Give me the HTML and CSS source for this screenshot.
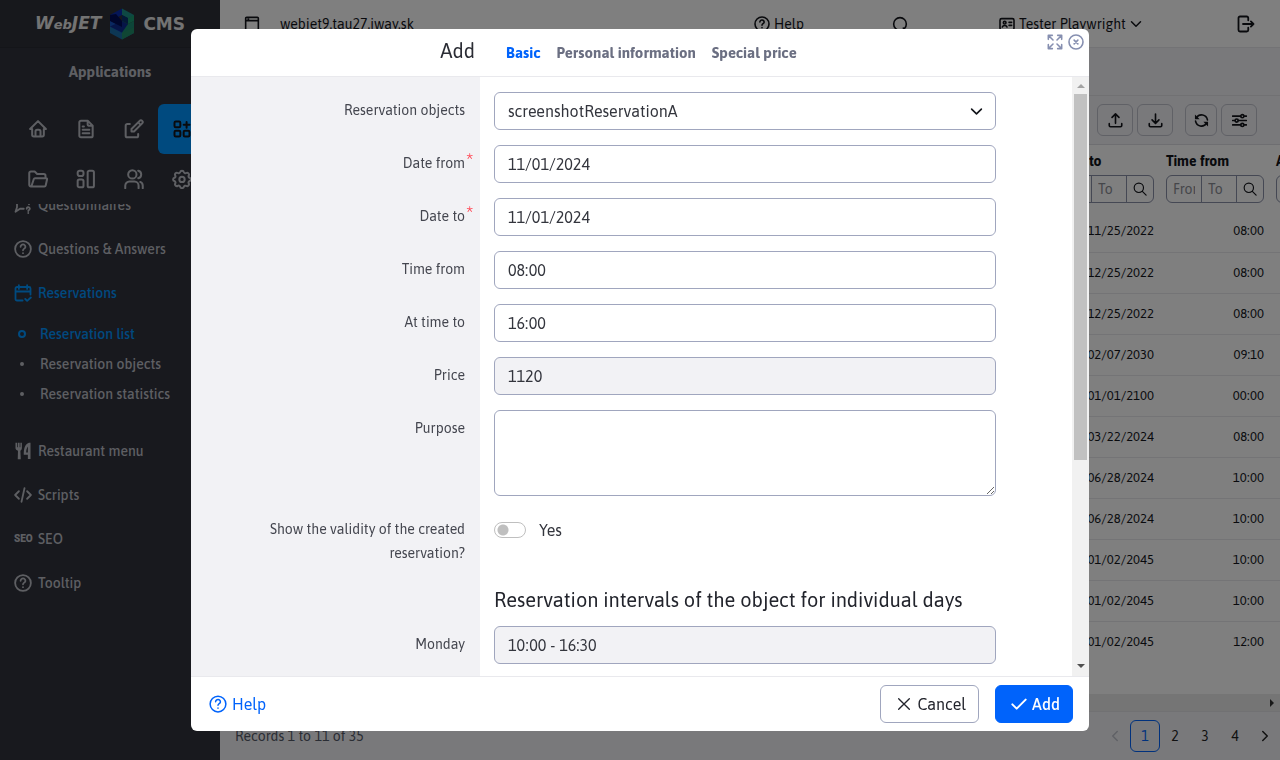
FILE: index.html
```html
<!DOCTYPE html>
<html lang="en">
<head>
<meta charset="utf-8">
<title>WebJET CMS</title>
<link rel="stylesheet" href="styles.css">
</head>
<body>
<svg class="defs" width="0" height="0" aria-hidden="true">
  <symbol id="i-home" viewBox="0 0 24 24"><path d="M5 12H2.500L12 2.500l9.500 9.500H19M5 12v7a2 2 0 0 0 2 2h10a2 2 0 0 0 2-2v-7M9 21v-6a2 2 0 0 1 2-2h2a2 2 0 0 1 2 2v6"/></symbol>
  <symbol id="i-file" viewBox="0 0 24 24"><path d="M14 3v4a1 1 0 0 0 1 1h5M18 22H6a2 2 0 0 1-2-2V4a2 2 0 0 1 2-2h8l6 6v12a2 2 0 0 1-2 2zM8 9h1.500M8 13h8M8 17h8"/></symbol>
  <symbol id="i-edit" viewBox="0 0 24 24"><path d="M7 6H4a2 2 0 0 0-2 2v12a2 2 0 0 0 2 2h11a2 2 0 0 0 2-2v-2M21.800 5.200a2 2 0 0 0-3-3L9 12v3h3zM17 4l3 3"/></symbol>
  <symbol id="i-apps" viewBox="0 0 24 24"><rect x="3" y="3" width="7" height="7" rx="1.500"/><rect x="3" y="14" width="7" height="7" rx="1.500"/><rect x="14" y="14" width="7" height="7" rx="1.500"/><path d="M14 7h7M17.500 3.500v7"/></symbol>
  <symbol id="i-folder" viewBox="0 0 24 24"><path d="M4 21l3-9A1.500 1.500 0 0 1 8.500 11H22a1 1 0 0 1 .9 1.200l-1.600 7.200A2 2 0 0 1 19.500 21H3.500a2 2 0 0 1-2-2V5a2 2 0 0 1 2-2H8l3 3h8a2 2 0 0 1 2 2v3"/></symbol>
  <symbol id="i-layout" viewBox="0 0 24 24"><rect x="2" y="2" width="7" height="6.500" rx="2.500"/><rect x="2" y="12.500" width="7" height="9.500" rx="2"/><rect x="14" y="2" width="7.500" height="20" rx="2"/></symbol>
  <symbol id="i-users" viewBox="0 0 24 24"><circle cx="10" cy="6.500" r="5"/><path d="M1.500 23v-3a5 5 0 0 1 5-5h6a5 5 0 0 1 5 5v3M17 2a4.600 4.600 0 0 1 0 9M22.500 23v-3a5 5 0 0 0-3-4.500"/></symbol>
  <symbol id="i-gear" viewBox="0 0 24 24"><path d="M9.800 3.600c.5-2.100 3.900-2.100 4.400 0a2 2 0 0 0 2.900 1.200c1.900-1.100 4.100 1.200 3 3a2 2 0 0 0 1 2.800c2.100.5 2.100 3.300 0 3.800a2 2 0 0 0-1 2.900c1.100 1.800-1.200 4.100-3 3a2 2 0 0 0-2.900 1.100c-.5 2.100-3.900 2.100-4.400 0a2 2 0 0 0-2.900-1.200c-1.900 1.200-4.100-1.100-3-2.900a2 2 0 0 0-1-2.900c-2.100-.5-2.100-3.300 0-3.800a2 2 0 0 0 1-2.900c-1.100-1.800 1.100-4.100 3-2.900a2 2 0 0 0 2.900-1.200z"/><circle cx="12" cy="12.500" r="3.200"/></symbol>
  <symbol id="i-help" viewBox="0 0 24 24"><circle cx="12" cy="12" r="10.500"/><path d="M8.800 9a3.200 3.200 0 0 1 6.400.3c0 2-3.200 2.400-3.200 4.400M12 17.400v.2"/></symbol>
  <symbol id="i-chat" viewBox="0 0 24 24"><path d="M13 17H8l-6 4 2-6V5h16v6M17 17a2 2 0 1 1 3 1.600c-.7.400-1 .8-1 1.400M19 22.500v.2"/></symbol>
  <symbol id="i-cal" viewBox="0 0 24 24"><path d="M11.500 22H4a2 2 0 0 1-2-2V6a2 2 0 0 1 2-2h16a2 2 0 0 1 2 2v8M17.500 1.500v5M6.500 1.500v5M2 10h20M15 20l2.500 2.500L22.500 18"/></symbol>
  <symbol id="i-food" viewBox="0 0 24 24"><path class="solid" d="M2 1h2v6h1V1h2.500v6h1V1h2v7c0 2-1 3-2 3.500L9 23H5l.3-11.500C3.500 11 2 10 2 8zM20 1h2v21.500h-3.500V17H13c0-7 1-14 7-16zM18.500 6C17 8 16.200 11 16.200 14h2.300z"/></symbol>
  <symbol id="i-code" viewBox="0 0 24 24"><path d="M6.500 7l-5 5 5 5M17.500 7l5 5-5 5M14 3l-4 18"/></symbol>
  <symbol id="i-window" viewBox="0 0 24 24"><rect x="2.500" y="2" width="19" height="20" rx="1.500"/><path d="M3 7h18M6 4.500h1"/></symbol>
  <symbol id="i-search" viewBox="0 0 24 24"><circle cx="10" cy="10" r="8"/><path d="M16 16l6.500 6.500"/></symbol>
  <symbol id="i-find" viewBox="0 0 24 24"><circle cx="12" cy="12" r="9.500"/><path d="M17 18l4 4.500"/></symbol>
  <symbol id="i-id" viewBox="0 0 24 24"><rect x="1.500" y="4" width="21" height="17" rx="2.500"/><circle cx="8.500" cy="10" r="2"/><path d="M5 16.500c1-3 6-3 7 0M15 9.500h4M15 14h4"/></symbol>
  <symbol id="i-down" viewBox="0 0 24 24"><path d="M3 7.500l9 9 9-9"/></symbol>
  <symbol id="i-logout" viewBox="0 0 24 24"><path d="M15 7V4a2 2 0 0 0-2-2H4a2 2 0 0 0-2 2v16a2 2 0 0 0 2 2h9a2 2 0 0 0 2-2v-3M8 12h14M18.500 8.500L22 12l-3.500 3.500"/></symbol>
  <symbol id="i-upload" viewBox="0 0 24 24"><path d="M2 17v3a2 2 0 0 0 2 2h16a2 2 0 0 0 2-2v-3M6.500 7L12 1.500 17.500 7M12 2v14.500"/></symbol>
  <symbol id="i-download" viewBox="0 0 24 24"><path d="M2 17v3a2 2 0 0 0 2 2h16a2 2 0 0 0 2-2v-3M6.500 11l5.500 5.500 5.500-5.500M12 1.500v14"/></symbol>
  <symbol id="i-refresh" viewBox="0 0 24 24"><path d="M21.500 11A9.600 9.600 0 0 0 4 7.500M2.500 13A9.600 9.600 0 0 0 20 16.500"/><path class="solid" d="M1.500 2.500v7.500H9zM22.500 21.500V14H15z"/></symbol>
  <symbol id="i-sliders" viewBox="0 0 24 24"><path d="M1 5h13M19 5h4M1 12h4M10 12h13M1 19h13M19 19h4"/><circle cx="16.500" cy="5" r="2.500"/><circle cx="7.500" cy="12" r="2.500"/><circle cx="16.500" cy="19" r="2.500"/></symbol>
  <symbol id="i-expand" viewBox="0 0 24 24"><path d="M9 9L3 3M15 9l6-6M9 15l-6 6M15 15l6 6M2 8V2h6M16 2h6v6M2 16v6h6M16 22h6v-6"/></symbol>
  <symbol id="i-close" viewBox="0 0 24 24"><circle cx="12" cy="12" r="10.500"/><path d="M9.200 9.200l5.600 5.600M14.800 9.200l-5.600 5.600"/></symbol>
  <symbol id="i-x" viewBox="0 0 24 24"><path d="M4 4l16 16M20 4L4 20"/></symbol>
  <symbol id="i-check" viewBox="0 0 24 24"><path d="M2 12.500l6.500 6.500L22 5.500"/></symbol>
  <symbol id="i-left" viewBox="0 0 24 24"><path d="M16.500 3l-9 9 9 9"/></symbol>
  <symbol id="i-right" viewBox="0 0 24 24"><path d="M7.500 3l9 9-9 9"/></symbol>
</svg>

<div class="app">
  <aside class="sidebar">
    <div class="logo">
      <span class="logo-text"><i>W<small>eb</small>JET</i></span>
      <svg class="logo-mark" viewBox="0 0 26 32" aria-hidden="true">
        <path fill="#1a6ea8" d="M1 18l12 6 12-5v6l-12 6.500L1 25z"/>
        <path fill="#208c68" d="M13 24l12-5.500v6.500l-12 6.500z"/>
        <path fill="#1450c0" d="M1 12.500L13 19v6L1 18.500z"/>
        <path fill="#1a8a70" d="M25 13v6l-12 6v-6z"/>
        <path fill="#0c2a90" d="M1 18.500l12-5.500 6 3-6 8.500z"/>
        <path fill="#0a2cae" d="M13 .5V7L1 13V7z"/>
        <path fill="#1c9088" d="M13 .5L25 7v6.500L13 7z"/>
        <path fill="#1a9a70" d="M25 7v6l-6 3-6-3z"/>
        <path fill="#000c58" d="M1 7l6-1 6 7v6L1 13z"/>
        <path fill="#06306e" d="M13 7l6 3v6l-6-3z"/>
      </svg>
      <span class="logo-text">CMS</span>
    </div>
    <h1 class="side-title">Applications</h1>
    <nav class="tiles" aria-label="Sections">
      <a href="#" aria-label="Home"><svg class="ico"><use href="#i-home"/></svg></a>
      <a href="#" aria-label="Pages"><svg class="ico"><use href="#i-file"/></svg></a>
      <a href="#" aria-label="Edit"><svg class="ico"><use href="#i-edit"/></svg></a>
      <a href="#" aria-label="Applications" class="active"><svg class="ico"><use href="#i-apps"/></svg></a>
      <a href="#" aria-label="Files"><svg class="ico"><use href="#i-folder"/></svg></a>
      <a href="#" aria-label="Templates"><svg class="ico"><use href="#i-layout"/></svg></a>
      <a href="#" aria-label="Users"><svg class="ico"><use href="#i-users"/></svg></a>
      <a href="#" aria-label="Settings"><svg class="ico"><use href="#i-gear"/></svg></a>
    </nav>
    <nav class="menu" aria-label="Applications">
      <ul class="menu-list">
        <li><a href="#"><svg class="ico"><use href="#i-chat"/></svg>Questionnaires</a></li>
        <li><a href="#"><svg class="ico"><use href="#i-help"/></svg>Questions &amp; Answers</a></li>
        <li><a href="#" class="on"><svg class="ico"><use href="#i-cal"/></svg>Reservations</a>
          <ul class="sub">
            <li><a href="#" class="on"><span class="ring"></span>Reservation list</a></li>
            <li><a href="#"><span class="dot"></span>Reservation objects</a></li>
            <li><a href="#"><span class="dot"></span>Reservation statistics</a></li>
          </ul>
        </li>
        <li><a href="#"><svg class="ico"><use href="#i-food"/></svg>Restaurant menu</a></li>
        <li><a href="#"><svg class="ico"><use href="#i-code"/></svg>Scripts</a></li>
        <li><a href="#"><b class="seo">SEO</b>SEO</a></li>
        <li><a href="#"><svg class="ico"><use href="#i-help"/></svg>Tooltip</a></li>
      </ul>
    </nav>
  </aside>

  <main class="main">
    <header class="topbar">
      <a href="#" class="site"><svg class="ico"><use href="#i-window"/></svg>webjet9.tau27.iway.sk</a>
      <div class="topnav">
        <a href="#"><svg class="ico"><use href="#i-help"/></svg>Help</a>
        <a href="#" aria-label="Search"><svg class="ico"><use href="#i-find"/></svg></a>
        <a href="#"><svg class="ico"><use href="#i-id"/></svg>Tester Playwright<svg class="ico chev"><use href="#i-down"/></svg></a>
        <a href="#" aria-label="Log out"><svg class="ico big"><use href="#i-logout"/></svg></a>
      </div>
    </header>
    <div class="band"></div>
    <div class="toolbar">
      <button type="button" aria-label="Import"><svg class="ico"><use href="#i-upload"/></svg></button>
      <button type="button" aria-label="Export"><svg class="ico"><use href="#i-download"/></svg></button>
      <button type="button" aria-label="Reload" class="apart"><svg class="ico"><use href="#i-refresh"/></svg></button>
      <button type="button" aria-label="Settings"><svg class="ico"><use href="#i-sliders"/></svg></button>
    </div>
    <div class="grid-wrap">
      <table class="grid">
        <colgroup><col><col class="c"><col class="c"><col class="c"></colgroup>
        <thead>
          <tr>
            <th></th>
            <th>Date to
              <div class="filter"><input aria-label="Date to from" placeholder="From"><input aria-label="Date to until" placeholder="To"><button type="button" aria-label="Filter"><svg class="ico"><use href="#i-search"/></svg></button></div></th>
            <th>Time from
              <div class="filter"><input aria-label="Time from from" placeholder="From"><input aria-label="Time from until" placeholder="To"><button type="button" aria-label="Filter"><svg class="ico"><use href="#i-search"/></svg></button></div></th>
            <th>At time to
              <div class="filter"><input aria-label="At time to from" placeholder="From"><input aria-label="At time to until" placeholder="To"><button type="button" aria-label="Filter"><svg class="ico"><use href="#i-search"/></svg></button></div></th>
          </tr>
        </thead>
        <tbody>
          <tr><td></td><td>11/25/2022</td><td>08:00</td><td></td></tr>
          <tr><td></td><td>12/25/2022</td><td>08:00</td><td></td></tr>
          <tr><td></td><td>12/25/2022</td><td>08:00</td><td></td></tr>
          <tr><td></td><td>02/07/2030</td><td>09:10</td><td></td></tr>
          <tr><td></td><td>01/01/2100</td><td>00:00</td><td></td></tr>
          <tr><td></td><td>03/22/2024</td><td>08:00</td><td></td></tr>
          <tr><td></td><td>06/28/2024</td><td>10:00</td><td></td></tr>
          <tr><td></td><td>06/28/2024</td><td>10:00</td><td></td></tr>
          <tr><td></td><td>01/02/2045</td><td>10:00</td><td></td></tr>
          <tr><td></td><td>01/02/2045</td><td>10:00</td><td></td></tr>
          <tr><td></td><td>01/02/2045</td><td>12:00</td><td></td></tr>
        </tbody>
      </table>
    </div>
    <div class="hbar" aria-hidden="true"><span class="arrow-r"></span></div>
    <footer class="pager">
      <span>Records 1 to 11 of 35</span>
      <nav class="pages" aria-label="Pages">
        <a href="#" aria-label="Previous" class="off"><svg class="ico"><use href="#i-left"/></svg></a>
        <a href="#" class="cur">1</a><a href="#">2</a><a href="#">3</a><a href="#">4</a>
        <a href="#" aria-label="Next"><svg class="ico"><use href="#i-right"/></svg></a>
      </nav>
    </footer>
  </main>
</div>

<div class="backdrop">
  <form class="modal" role="dialog" aria-labelledby="dlg-title">
    <header class="modal-head">
      <h2 id="dlg-title">Add</h2>
      <nav class="tabs">
        <a href="#" class="on">Basic</a><a href="#">Personal information</a><a href="#">Special price</a>
      </nav>
      <div class="win">
        <button type="button" aria-label="Maximize"><svg class="ico"><use href="#i-expand"/></svg></button>
        <button type="button" aria-label="Close"><svg class="ico"><use href="#i-close"/></svg></button>
      </div>
    </header>
    <div class="modal-body">
      <div class="fields">
        <div class="row"><label for="f1">Reservation objects</label>
          <div class="select"><select id="f1"><option>screenshotReservationA</option></select><svg class="ico"><use href="#i-down"/></svg></div></div>
        <div class="row"><label for="f2">Date from<span class="req">*</span></label><input id="f2" value="11/01/2024"></div>
        <div class="row"><label for="f3">Date to<span class="req">*</span></label><input id="f3" value="11/01/2024"></div>
        <div class="row"><label for="f4">Time from</label><input id="f4" value="08:00"></div>
        <div class="row"><label for="f5">At time to</label><input id="f5" value="16:00"></div>
        <div class="row"><label for="f6">Price</label><input id="f6" value="1120" readonly></div>
        <div class="row"><label for="f7">Purpose</label><textarea id="f7"></textarea></div>
        <div class="row"><span class="cap" id="cap8">Show the validity of the created reservation?</span>
          <label class="switch"><input type="checkbox" aria-describedby="cap8">Yes</label></div>
        <div class="row head"><h3>Reservation intervals of the object for individual days</h3></div>
        <div class="row"><label for="f9">Monday</label><input id="f9" value="10:00 - 16:30" readonly></div>
      </div>
      <div class="vbar" aria-hidden="true"><span class="arrow-u"></span><div class="track"><div class="thumb"></div></div><span class="arrow-d"></span></div>
    </div>
    <footer class="modal-foot">
      <a href="#" class="help"><svg class="ico"><use href="#i-help"/></svg>Help</a>
      <button type="button" class="btn"><svg class="ico"><use href="#i-x"/></svg>Cancel</button>
      <button type="submit" class="btn primary"><svg class="ico"><use href="#i-check"/></svg>Add</button>
    </footer>
  </form>
</div>
</body>
</html>
```
FILE: styles.css
```css
* { box-sizing: border-box; }
body { margin: 0; font: 14px/24px Asap, Lato, "Open Sans", sans-serif; color: #13151b; overflow: hidden; }
button, input, select, textarea { font: inherit; color: inherit; }
a { color: inherit; text-decoration: none; }
ul { list-style: none; margin: 0; padding: 0; }
h1, h2, h3 { margin: 0; font-weight: 400; }
.defs { position: absolute; }
.ico { width: 18px; height: 18px; flex: none; fill: none; stroke: currentColor; stroke-width: 2; stroke-linecap: round; stroke-linejoin: round; }
.solid { fill: currentColor; stroke: none; }

.app { display: flex; height: 100vh; }

/* Sidebar */
.sidebar { width: 220px; flex: none; display: flex; flex-direction: column; background: #30333c; color: #bcbec6; }
.logo { height: 48px; display: flex; align-items: center; justify-content: center; gap: 8px; border-bottom: 1px solid #292b33; background: #2f3139; }
.logo-text { font: 700 17px/24px "DejaVu Sans", sans-serif; color: #e6e6e6; }
.logo-text small { font-size: 13px; }
.logo-mark { width: 26px; height: 32px; }
.side-title { font-size: 15px; font-weight: 700; text-align: center; padding: 12px 0 20px; }
.tiles { display: grid; grid-template-columns: repeat(4, 48px); grid-auto-rows: 50px; padding: 0 14px; flex: none; }
.tiles a { display: flex; align-items: center; justify-content: center; border-radius: 6px; }
.tiles .ico { width: 20px; height: 20px; stroke-width: 2.4; }
.tiles .active { background: #0094ff; color: #13151b; }
.menu { overflow: hidden; flex: 1; }
.menu-list { margin-top: -21px; }
.menu a { display: flex; align-items: center; gap: 6px; height: 44px; padding-left: 14px; font-weight: 500; }
.menu .on { color: #0094ff; }
.menu .ico { stroke-width: 2.4; }
.sub { padding: 4px 0 20px; }
.menu .sub a { height: 30px; gap: 8px; }
.ring, .dot { width: 8px; height: 8px; border-radius: 50%; margin: 0 5px 0 4px; border: 2px solid currentColor; }
.ring { margin-right: 6px; }
.dot { width: 4px; height: 4px; margin: 0 8px 0 6px; }
.seo { width: 18px; font: 900 10px/10px Roboto, sans-serif; }

/* Main area */
.main { flex: 1; min-width: 0; display: flex; flex-direction: column; background: #fff; }
.topbar { height: 48px; display: flex; align-items: center; justify-content: space-between; padding: 0 25px 0 24px; border-bottom: 1px solid #e6e6ea; }
.topbar a { display: flex; align-items: center; gap: 4px; }
.topbar .ico { width: 16px; height: 16px; stroke-width: 2.4; }
.topbar .site { gap: 20px; }
.topbar .chev { width: 12px; height: 12px; stroke-width: 3; }
.topbar .big { width: 18px; height: 18px; }
.topnav { display: grid; grid-template-columns: 138px 107px 238px 18px; }
.band { height: 48px; background: #f3f3f6; border-bottom: 1px solid #e2e2e6; }
.toolbar { height: 49px; display: flex; align-items: center; justify-content: flex-end; gap: 4px; padding: 0 23px; background: #f3f3f6; border-bottom: 1px solid #dcdce2; }
.toolbar button { width: 36px; height: 32px; display: flex; align-items: center; justify-content: center; padding: 0; background: none; border: 1px solid #c0c2cd; border-radius: 6px; }
.toolbar .apart { width: 32px; margin-left: 8px; }
.toolbar .ico { width: 15px; height: 15px; stroke-width: 2.6; }
.grid-wrap { flex: 1; overflow: hidden; }
.grid { width: calc(100% + 100px); table-layout: fixed; border-collapse: collapse; }
.grid .c { width: 110px; }
.grid th { padding: 8px 6px; text-align: left; font-weight: 700; line-height: 17px; white-space: nowrap; }
.grid td { height: 41px; padding: 0 6px; border-bottom: 1px solid #e9e9ed; text-align: right; font-size: 13px; }
.grid tr:last-child td { border: 0; }
.filter { display: grid; grid-template-columns: 35px 35px 26px; height: 28px; margin-top: 5px; border: 1px solid #8a90a8; border-radius: 6px; overflow: hidden; font-weight: 400; }
.filter input { min-width: 0; width: 100%; border: 0; border-right: 1px solid #8a90a8; background: none; padding: 0 6px; }
.filter input::placeholder { color: #8b8d95; }
.filter button { display: flex; align-items: center; justify-content: center; border: 0; padding: 0; background: none; }
.filter .ico { width: 14px; height: 14px; }
.hbar { height: 17px; display: flex; align-items: center; justify-content: flex-end; padding-right: 6px; background: #eaeaea; }
.arrow-r { border: 4px solid transparent; border-left-color: #333; border-right: 0; }
.pager { height: 49px; display: flex; align-items: center; justify-content: space-between; padding: 0 0 0 15px; background: #f3f3f6; border-top: 1px solid #e2e2e6; color: #555a68; }
.pages { display: flex; color: #222; }
.pages a { width: 30px; height: 32px; display: flex; align-items: center; justify-content: center; border: 1px solid transparent; }
.pages .cur { color: #0063fb; border-color: #0063fb; border-radius: 6px; }
.pages .off { color: #c0c2cc; }
.pages .ico { width: 12px; height: 12px; stroke-width: 3; }

/* Dialog */
.backdrop { position: fixed; inset: 0; display: flex; justify-content: center; align-items: center; background: rgba(0, 0, 0, .5); }
.modal { width: 94%; max-width: 898px; height: calc(100vh - 58px); display: flex; flex-direction: column; background: #fff; border-radius: 6px; overflow: hidden; }
.modal-head { flex: none; height: 48px; display: flex; align-items: center; border-bottom: 1px solid #e9e9ed; }
.modal-head h2 { width: 284px; padding-bottom: 3px; text-align: right; font-size: 20px; color: #2b2d35; }
.tabs { flex: 1; display: flex; gap: 16px; margin-left: 31px; font-size: 15px; font-weight: 700; color: #6b6f82; }
.tabs .on { color: #0063fb; }
.win { display: flex; gap: 5px; align-self: flex-start; padding: 5px 5px 0 0; }
.win button { padding: 0; border: 0; background: none; color: #868fb0; display: flex; }
.win .ico { width: 16px; height: 16px; stroke-width: 2.4; }
.modal-body { flex: 1; min-height: 0; display: flex; }
.fields { flex: 1; min-width: 0; overflow: hidden; padding-top: 15px; background: linear-gradient(90deg, #f2f2f5 289px, #fff 289px); }
.row { display: grid; grid-template-columns: 274px minmax(0, 1fr); gap: 29px; align-items: start; padding: 0 76px 15px 0; }
.row > label:first-child, .cap { text-align: right; padding-top: 6px; color: #44464f; }
.cap { padding-left: 60px; }
.req { display: inline-block; width: 8px; margin-right: -8px; padding-left: 1px; color: #ff4b58; font-size: 20px; line-height: 20px; vertical-align: top; }
.row > input, .row select, .row textarea { width: 100%; height: 38px; margin: 0; padding: 0 13px; font-size: 16px; border: 1px solid #a0a6be; border-radius: 6px; background: #fff; color: #33353d; display: block; }
.row textarea { height: 86px; }
.row > input:read-only { background: #f2f2f5; }
.select { display: grid; align-items: center; }
.select select { grid-area: 1 / 1; appearance: none; }
.select .ico { grid-area: 1 / 1; justify-self: end; margin-right: 13px; width: 13px; height: 13px; stroke-width: 3; pointer-events: none; }
.switch { display: flex; align-items: center; gap: 13px; padding-top: 7px; font-size: 16px; color: #33353d; }
.switch input { appearance: none; width: 32px; height: 16px; margin: 0; border: 1px solid #bfbfbf; border-radius: 8px; background: radial-gradient(circle at 8px 7px, #bfbfbf 5px, #fff 6px); }
.row.head { padding-top: 5px; padding-bottom: 11px; }
.head h3 { grid-column: 2; font-size: 20px; line-height: 30px; color: #22242c; white-space: nowrap; }
.vbar { width: 17px; flex: none; display: flex; flex-direction: column; align-items: center; background: #f1f1f1; }
.track { flex: 1; width: 13px; }
.thumb { height: 65%; background: #c1c1c1; }
.arrow-u { border: 4px solid transparent; border-bottom-color: #a3a3a3; border-top: 0; margin: 7px 0 6px; }
.arrow-d { border: 4px solid transparent; border-top-color: #505050; border-bottom: 0; margin: 7px 0 8px; }
.modal-foot { flex: none; display: flex; align-items: center; gap: 16px; padding: 8px 16px 8px 18px; border-top: 1px solid #e9e9ed; font-size: 16px; }
.help { display: flex; align-items: center; gap: 5px; margin-right: auto; color: #0063fb; }
.btn { height: 38px; display: flex; align-items: center; gap: 5px; padding: 0 12px 0 15px; border: 1px solid #a0a6be; border-radius: 6px; background: #fff; color: #22242c; }
.btn .ico { width: 16px; height: 16px; }
.primary { background: #0063fb; border-color: #0063fb; color: #fff; font-weight: 500; }
.primary .ico { stroke-width: 3; }
```
